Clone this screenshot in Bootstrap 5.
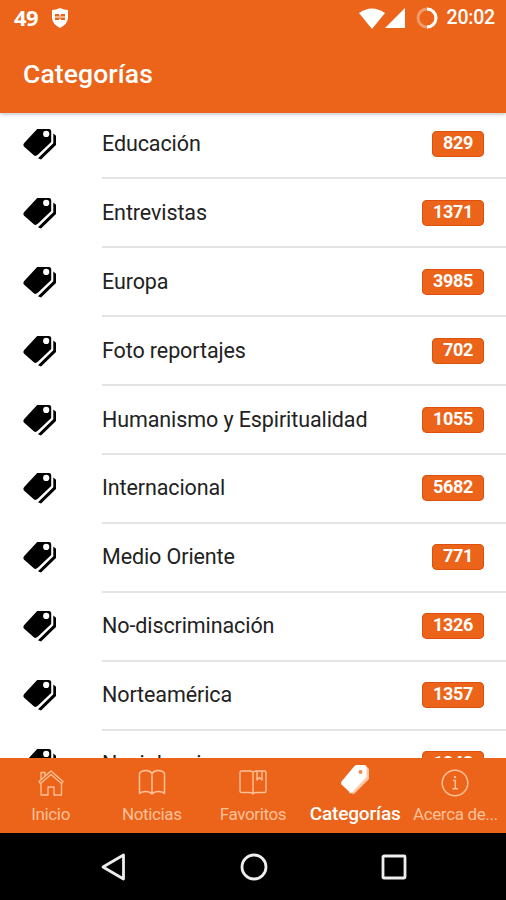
<!DOCTYPE html>
<html lang="es" data-bs-theme="light">
<head>
<meta charset="utf-8">
<meta name="viewport" content="width=device-width, initial-scale=1">
<title>Categorías</title>
<link href="https://cdn.jsdelivr.net/npm/bootstrap@5.3.0/dist/css/bootstrap.min.css" rel="stylesheet">
<style>
  :root { --brand: #eb6419; }
  body { font-family: Roboto, "Liberation Sans", sans-serif; width: 506px; height: 900px; }
  svg { display: block; flex: none; }
  .app-top { background: var(--brand); height: 113px; z-index: 2; box-shadow: 0 1px 4px rgba(40,50,90,.35); }
  .status { height: 36px; padding: 0 11px 0 14px; }
  .notif { font: 700 22px/34px "Noto Sans", sans-serif; letter-spacing: -.6px; width: 37px; padding-bottom: 2px; }
  .clock { font-size: 19.5px; font-weight: 500; letter-spacing: -.2px; margin-left: 9px; }
  .ring { margin-left: 11px; }
  .title { font-size: 26.5px; font-weight: 500; line-height: 34px; padding: 21px 23px 0; letter-spacing: .1px; }
  .cat-list { margin-top: -2.5px; min-height: 0; }
  .cat { height: 68.9px; flex: none; padding-left: 23px; }
  .cat-icon { width: 79px; padding-bottom: 2px; }
  .cat-body { border-bottom: 2px solid #e4e4e6; padding-right: 22px; }
  .cat-name { font-size: 21.5px; font-weight: 400; color: #222; letter-spacing: -.1px; line-height: 30px; }
  .count { background: var(--brand); box-shadow: inset 0 0 0 1px #dc500d; border-radius: 5px; font-size: 18px; font-weight: 700; line-height: 23px; height: 26px; padding: 0 11px; letter-spacing: -.35px; }
  .tabs { background: var(--brand); height: 75px; z-index: 2; }
  .tab { color: #ffc09a; font-size: 17px; letter-spacing: -.35px; line-height: 20px; width: 20%; white-space: nowrap; padding-top: 10px; }
  .tab svg { height: 30px; margin-bottom: 6px; }
  .tab.current { color: #fff; font-size: 19px; font-weight: 500; letter-spacing: -.15px; padding-top: 6px; padding-left: 2px; }
  .tab.current svg { height: 32px; margin-bottom: 8px; }
  .sysbar { height: 67px; padding: 0 99px 0 101px; }
</style>
<script src="https://cdn.jsdelivr.net/npm/bootstrap@5.3.0/dist/js/bootstrap.bundle.min.js"></script>
</head>
<body class="d-flex flex-column overflow-hidden bg-white">
<svg class="d-none">
  <symbol id="tags" viewBox="0 0 34 32">
    <path fill-rule="evenodd" d="M14.200 1H26Q28 1 28.200 3V14L14.800 26.800Q12.600 28.800 10.800 27.200L1.200 18.800Q-.4 17 1.200 15ZM23.200 2.800A3.100 3.100 0 1 0 23.200 9A3.100 3.100 0 1 0 23.200 2.800Z"/>
    <path d="M30.300 5.500L33 7.800V17L18 31.400L15 30.200L30.300 15.300Z"/>
  </symbol>
</svg>
<header class="app-top position-relative text-white flex-shrink-0">
  <div class="status d-flex align-items-center">
    <span class="notif">49</span>
    <svg width="18" height="20" viewBox="0 0 18 20"><path fill="#fff" d="M9 0Q13 2 17 2V10Q16.500 16 9 20Q1.500 16 1 10V2Q5 2 9 0Z"/><path fill="#eb6419" d="M4 6H8V7.500H10V6H14V8.500H4ZM4 9.500H14V12H10V10.800H8V12H4Z"/></svg>
    <svg class="ms-auto" width="26" height="21" viewBox="0 0 26 21"><path fill="#fff" d="M0 5Q13-4 26 5L13 21Z"/></svg>
    <svg width="20" height="20" viewBox="0 0 20 20"><path fill="#fff" d="M20 0V20H0Z"/></svg>
    <svg class="ring" width="22" height="22" viewBox="0 0 22 22" fill="none" stroke="#fff" stroke-width="3"><circle cx="11" cy="11" r="9" opacity=".35"/><path d="M11 2A9 9 0 0 1 11 20"/></svg>
    <span class="clock">20:02</span>
  </div>
  <h1 class="title m-0">Categorías</h1>
</header>

<main class="cat-list flex-grow-1 overflow-hidden d-flex flex-column" id="list">
  <div class="cat d-flex"><div class="cat-icon d-flex align-items-center"><svg width="34" height="32"><use href="#tags"/></svg></div><div class="cat-body flex-grow-1 d-flex align-items-center justify-content-between"><span class="cat-name">Educación</span><span class="count text-white">829</span></div></div>
  <div class="cat d-flex"><div class="cat-icon d-flex align-items-center"><svg width="34" height="32"><use href="#tags"/></svg></div><div class="cat-body flex-grow-1 d-flex align-items-center justify-content-between"><span class="cat-name">Entrevistas</span><span class="count text-white">1371</span></div></div>
  <div class="cat d-flex"><div class="cat-icon d-flex align-items-center"><svg width="34" height="32"><use href="#tags"/></svg></div><div class="cat-body flex-grow-1 d-flex align-items-center justify-content-between"><span class="cat-name">Europa</span><span class="count text-white">3985</span></div></div>
  <div class="cat d-flex"><div class="cat-icon d-flex align-items-center"><svg width="34" height="32"><use href="#tags"/></svg></div><div class="cat-body flex-grow-1 d-flex align-items-center justify-content-between"><span class="cat-name">Foto reportajes</span><span class="count text-white">702</span></div></div>
  <div class="cat d-flex"><div class="cat-icon d-flex align-items-center"><svg width="34" height="32"><use href="#tags"/></svg></div><div class="cat-body flex-grow-1 d-flex align-items-center justify-content-between"><span class="cat-name">Humanismo y Espiritualidad</span><span class="count text-white">1055</span></div></div>
  <div class="cat d-flex"><div class="cat-icon d-flex align-items-center"><svg width="34" height="32"><use href="#tags"/></svg></div><div class="cat-body flex-grow-1 d-flex align-items-center justify-content-between"><span class="cat-name">Internacional</span><span class="count text-white">5682</span></div></div>
  <div class="cat d-flex"><div class="cat-icon d-flex align-items-center"><svg width="34" height="32"><use href="#tags"/></svg></div><div class="cat-body flex-grow-1 d-flex align-items-center justify-content-between"><span class="cat-name">Medio Oriente</span><span class="count text-white">771</span></div></div>
  <div class="cat d-flex"><div class="cat-icon d-flex align-items-center"><svg width="34" height="32"><use href="#tags"/></svg></div><div class="cat-body flex-grow-1 d-flex align-items-center justify-content-between"><span class="cat-name">No-discriminación</span><span class="count text-white">1326</span></div></div>
  <div class="cat d-flex"><div class="cat-icon d-flex align-items-center"><svg width="34" height="32"><use href="#tags"/></svg></div><div class="cat-body flex-grow-1 d-flex align-items-center justify-content-between"><span class="cat-name">Norteamérica</span><span class="count text-white">1357</span></div></div>
  <div class="cat d-flex"><div class="cat-icon d-flex align-items-center"><svg width="34" height="32"><use href="#tags"/></svg></div><div class="cat-body flex-grow-1 d-flex align-items-center justify-content-between"><span class="cat-name">Noviolencia</span><span class="count text-white">1243</span></div></div>
</main>

<nav class="tabs position-relative d-flex flex-shrink-0">
  <div class="tab d-flex flex-column align-items-center">
    <svg width="26" height="30" viewBox="0 0 26 30" fill="none" stroke="currentColor" stroke-width="1.300" stroke-linejoin="round"><path d="M3 14.500V27H10V19H16V27H23.500V14.500M1 13.500L13 3L25 13.500L23.500 15.500L13 6.500L2.500 15.500ZM3 11.500V4.500H7V8"/></svg>Inicio</div>
  <div class="tab d-flex flex-column align-items-center">
    <svg width="28" height="30" viewBox="0 0 28 30" fill="none" stroke="currentColor" stroke-width="1.500" stroke-linejoin="round"><path d="M14 5.500Q12 2.500 8 2.500Q3.500 2.500 1.500 5.500V25.500Q3.500 23.500 7.500 23.500Q12 23.500 14 26Q16 23.500 20.500 23.500Q24.500 23.500 26.500 25.500V5.500Q24.500 2.500 20 2.500Q16 2.500 14 5.500V26"/></svg>Noticias</div>
  <div class="tab d-flex flex-column align-items-center">
    <svg width="28" height="30" viewBox="0 0 28 30" fill="none" stroke="currentColor" stroke-width="1.400" stroke-linejoin="round"><path d="M14 4.500Q13 3 11 3H2.500Q1 3 1 4.500V23Q1 24.500 2.500 24.500H11Q13 24.500 14 26Q15 24.500 17 24.500H25.500Q27 24.500 27 23V4.500Q27 3 25.500 3H17Q15 3 14 4.500V26M18 3V12L20.500 9.500L23 12V3"/></svg>Favoritos</div>
  <div class="tab current d-flex flex-column align-items-center">
    <svg width="30" height="32" viewBox="0 0 30 32"><path fill="#ffc9a8" d="M15 3L26 2L29 5V15L14 30L9 29Z"/><path fill="#fff" fill-rule="evenodd" d="M14.500 2Q15.500 1 17 1H24.500Q26.500 1 26.500 3V13L12.500 28Q11 29.500 9.500 28L1.500 20.500Q.5 19 1.500 17.500ZM20.500 6A1.900 1.900 0 1 0 20.500 9.800A1.900 1.900 0 1 0 20.500 6Z"/><circle cx="20.500" cy="7.900" r="1.900" fill="#f08a52"/></svg>Categorías</div>
  <div class="tab d-flex flex-column align-items-center">
    <svg width="28" height="30" viewBox="0 0 28 30" fill="none" stroke="currentColor" stroke-width="1.500"><circle cx="14" cy="15" r="12.800"/><path d="M12 12.500H14.300V20.500M11.500 20.700H17" /><path d="M14 8V10.200" stroke-width="2.200"/></svg>Acerca de...</div>
</nav>

<footer class="sysbar bg-black d-flex align-items-center justify-content-between flex-shrink-0">
  <svg width="25" height="28" viewBox="0 0 25 28"><path d="M22.500 2V26L2 14Z" fill="none" stroke="#eee" stroke-width="2.800" stroke-linejoin="round"/></svg>
  <svg width="28" height="28" viewBox="0 0 28 28"><circle cx="14" cy="14" r="12" fill="none" stroke="#eee" stroke-width="2.800"/></svg>
  <svg width="26" height="26" viewBox="0 0 26 26"><rect x="2" y="2" width="22" height="22" rx="1" fill="none" stroke="#eee" stroke-width="2.800"/></svg>
</footer>
</body>
</html>
